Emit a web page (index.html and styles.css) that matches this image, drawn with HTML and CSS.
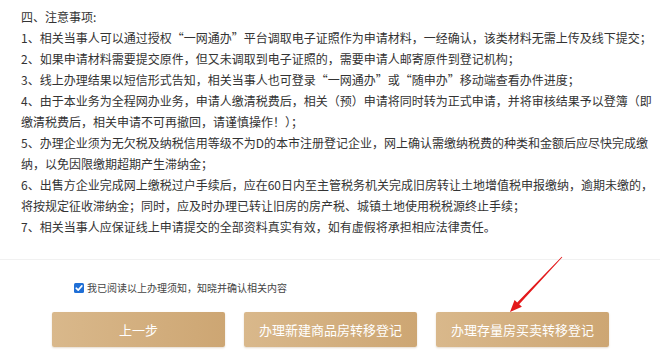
FILE: index.html
```html
<!DOCTYPE html>
<html lang="zh-CN">
<head>
<meta charset="utf-8">
<title>注意事项</title>
<link rel="stylesheet" href="styles.css">
</head>
<body>
<div class="page">
  <section class="notes">
    <p class="line">四、注意事项:</p>
    <p class="line">1、相关当事人可以通过授权“一网通办”平台调取电子证照作为申请材料，一经确认，该类材料无需上传及线下提交；</p>
    <p class="line">2、如果申请材料需要提交原件，但又未调取到电子证照的，需要申请人邮寄原件到登记机构；</p>
    <p class="line">3、线上办理结果以短信形式告知，相关当事人也可登录“一网通办”或“随申办”移动端查看办件进度；</p>
    <p class="line">4、由于本业务为全程网办业务，申请人缴清税费后，相关（预）申请将同时转为正式申请，并将审核结果予以登簿（即<br>缴清税费后，相关申请不可再撤回，请谨慎操作！）；</p>
    <p class="line">5、办理企业须为无欠税及纳税信用等级不为D的本市注册登记企业，网上确认需缴纳税费的种类和金额后应尽快完成缴<br>纳，以免因限缴期超期产生滞纳金；</p>
    <p class="line">6、出售方企业完成网上缴税过户手续后，应在60日内至主管税务机关完成旧房转让土地增值税申报缴纳，逾期未缴的，<br>将按规定征收滞纳金；同时，应及时办理已转让旧房的房产税、城镇土地使用税税源终止手续；</p>
    <p class="line">7、相关当事人应保证线上申请提交的全部资料真实有效，如有虚假将承担相应法律责任。</p>
  </section>
  <div class="divider"></div>
  <label class="agree">
    <span class="check"><svg viewBox="0 0 10 10" width="10" height="10"><rect x="0" y="0" width="10" height="10" rx="1.5" fill="#1f6fd6"/><path d="M2.2 5.2 L4.2 7.1 L7.9 2.9" fill="none" stroke="#fff" stroke-width="1.6" stroke-linecap="round" stroke-linejoin="round"/></svg></span>
    <span class="agree-text">我已阅读以上办理须知，知晓并确认相关内容</span>
  </label>
  <div class="actions">
    <button class="btn">上一步</button>
    <button class="btn">办理新建商品房转移登记</button>
    <button class="btn">办理存量房买卖转移登记</button>
  </div>
  <svg class="arrow" width="660" height="356" viewBox="0 0 660 356">
    <polygon points="562.3,257.3 561.7,256.7 517.2,302.4 514.6,299.9 510,312 521.9,306.7 519.2,304.2" fill="#e3191b"/>
  </svg>
</div>
</body>
</html>
```

FILE: styles.css
```css
html, body {
  margin: 0;
  padding: 0;
  background: #ffffff;
}

.page {
  position: relative;
  width: 660px;
  height: 356px;
  overflow: hidden;
  font-family: "Noto Sans CJK SC", "Noto Sans", sans-serif;
  color: #333333;
}

.notes {
  padding: 6px 0 0 21px;
}

.line {
  margin: 0;
  font-size: 12px;
  line-height: 21px;
  white-space: nowrap;
}

.divider {
  margin-top: 22px;
  height: 1px;
  background: #f1f1f1;
}

.agree {
  display: flex;
  align-items: center;
  gap: 3px;
  margin: 21px 0 0 74px;
  height: 14px;
}

.check {
  display: flex;
  width: 10px;
  height: 10px;
}

.agree-text {
  font-size: 10px;
  line-height: 14px;
  color: #444444;
}

.actions {
  display: flex;
  gap: 19px;
  margin: 17px 0 0 52px;
}

.btn {
  width: 173px;
  height: 35px;
  border: none;
  border-radius: 2px;
  background: linear-gradient(90deg, #d9b88b 0%, #cda673 100%);
  box-shadow: 0 1px 2px rgba(150, 110, 60, 0.25);
  color: #ffffff;
  font-family: "Noto Sans CJK SC", "Noto Sans", sans-serif;
  font-size: 13px;
  padding: 0;
}

.arrow {
  position: absolute;
  left: 0;
  top: 0;
  pointer-events: none;
}
```
